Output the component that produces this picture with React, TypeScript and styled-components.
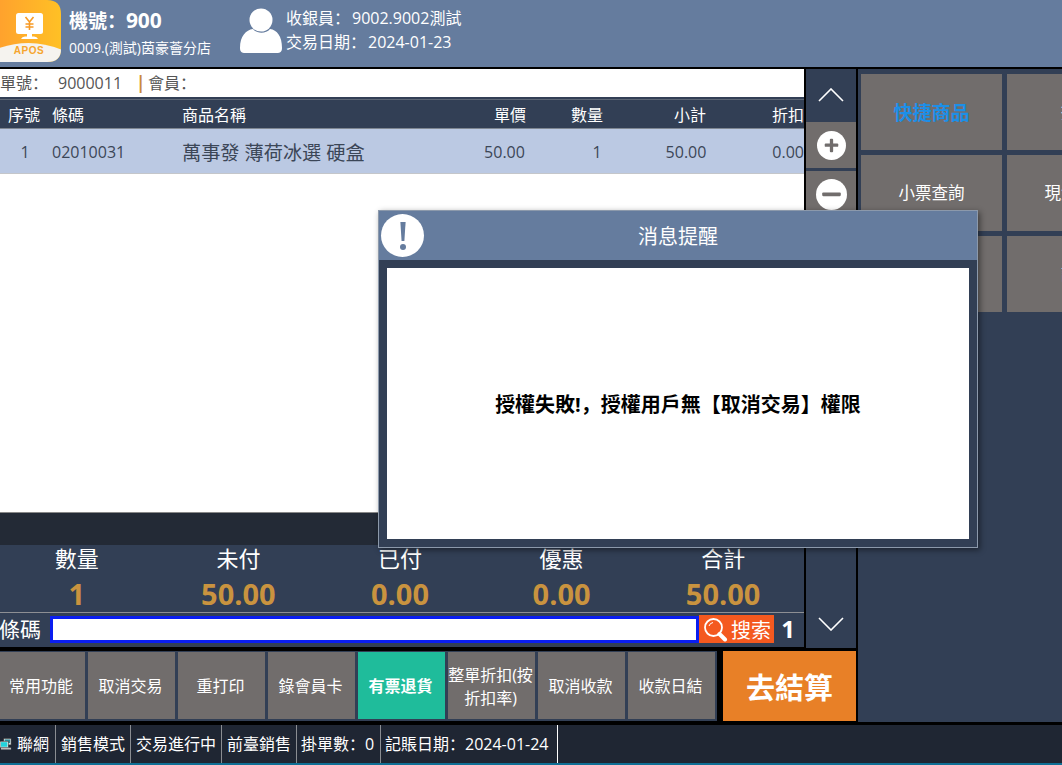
import React from 'react';
import styled, { createGlobalStyle } from 'styled-components';

const Global = createGlobalStyle`
  html, body { margin: 0; padding: 0; width: 1062px; height: 765px; overflow: hidden; background: #000; }
  * { box-sizing: border-box; }
  #root { width: 1062px; height: 765px; }
`;
const FONT = `"Open Sans", "Noto Sans CJK SC", "Noto Sans CJK TC", sans-serif`;

const Screen = styled.div`
  position: relative; width: 1062px; height: 765px; overflow: hidden; background: #000;
  display: flex; flex-direction: column; font-family: ${FONT}; color: #fff;
`;
const Header = styled.header`
  height: 67px; flex: none; background: #657c9e; display: flex; align-items: stretch; overflow: hidden; margin-bottom: 2px;
`;
const LogoBox = styled.div`width: 69px; flex: none; margin-top: -2px;`;
const Machine = styled.div`width: 171px; flex: none; display: flex; flex-direction: column;`;
const MachineNo = styled.div`font-size: 19px; font-weight: 700; line-height: 26px; margin-top: 7px; color: #fff; white-space: nowrap;`;
const MachineNum = styled.span`font-size: 21px; letter-spacing: -.2px;`;
const Shop = styled.div`font-size: 14px; line-height: 18px; margin-top: 5px; color: #fff; white-space: nowrap;`;
const PersonBox = styled.div`width: 46px; flex: none; padding-top: 8px;`;
const Cashier = styled.div`display: flex; flex-direction: column; padding-top: 6px;`;
const CashierLine = styled.div`font-size: 16px; line-height: 24px; white-space: nowrap;`;
const Gap2 = styled.span`margin-left: 2px;`;
const Workspace = styled.div`flex: none; height: 653px; display: flex; align-items: stretch;`;
const ColA = styled.div`width: 856px; flex: none; display: flex; flex-direction: column;`;
const TopA = styled.div`height: 582px; flex: none; display: flex; align-items: flex-start;`;
const Left = styled.div`width: 804px; height: 578px; flex: none; display: flex; flex-direction: column; overflow: hidden;`;
const InfoBar = styled.div`
  height: 28px; flex: none; background: #fff; color: #555; font-size: 16px; line-height: 28px; display: flex; white-space: nowrap;
`;
const OrderNo = styled.span`width: 137px; flex: none; display: flex;`;
const OrderLabel = styled.span`width: 58px; flex: none;`;
const Bar = styled.span`color: #c98a3c; width: 12px; margin-left: -1px; flex: none; font-size: 17px; font-weight: 700;`;
const TableHead = styled.div`
  height: 32px; flex: none; background: #323f55; border-top: 2px solid #323f55; box-shadow: inset 0 1px 0 #5d6776; border-bottom: 1px solid #7f8792;
  display: grid; grid-template-columns: 46px 136px 278px 100px 54px 152px 38px; align-items: center; font-size: 16px; color: #fff;
`;
const Cell = styled.div<{ $align?: string; $pad?: number; $padR?: number; $size?: number }>`
  text-align: ${p => p.$align || 'center'}; padding-left: ${p => p.$pad || 0}px; padding-right: ${p => p.$padR || 0}px; white-space: nowrap;
  ${p => (p.$size ? `font-size: ${p.$size}px;` : '')}
`;
const TableRow = styled.div`
  height: 45px; flex: none; background: #bbc9e3; border-bottom: 1px solid #c4c6ca; color: #3b4657; padding-top: 1px;
  display: grid; grid-template-columns: 46px 136px 278px 100px 54px 152px 38px; align-items: center; font-size: 16px;
`;
const TableBody = styled.div`flex: 1; background: #fff; border-bottom: 1px solid #888;`;
const DarkStrip = styled.div`height: 32px; flex: none; background: #232a36;`;
const Summary = styled.div`
  height: 68px; flex: none; background: #323f55; border-bottom: 1px solid #8d8f94; margin-left: -4px;
  display: grid; grid-template-columns: repeat(5, 161.6px);
`;
const SummaryCol = styled.div`display: flex; flex-direction: column; align-items: center;`;
const SummaryLabel = styled.div`font-size: 22px; line-height: 26px; color: #fff;`;
const SummaryValue = styled.div`font-size: 29px; font-weight: 700; line-height: 38px; margin-top: 4px; color: #c9933f;`;
const BarcodeRow = styled.div`
  height: 34px; flex: none; background: #323f55; display: flex; align-items: flex-start; padding-top: 2px;
`;
const BarcodeLabel = styled.div`width: 50px; flex: none; font-size: 21px; line-height: 28px; margin-left: -1px; padding-right: 0; flex-basis: 51px;`;
const BarcodeInput = styled.div`width: 649px; height: 27px; margin-top: 1px; flex: none; background: #fff; border: 3px solid #0a1ef0;`;
const SearchBtn = styled.div`
  width: 75px; height: 28px; flex: none; background: #f4591f; display: flex; align-items: center; padding-left: 4px; gap: 3px;
  font-size: 20px; color: #fff; white-space: nowrap;
`;
const Count = styled.div`flex: 1; text-align: center; font-size: 24px; font-weight: 700; line-height: 28px; padding-right: 2px;`;
const NavCol = styled.div`
  width: 50px; flex: none; margin-left: 2px; background: #323f55; display: flex; flex-direction: column; height: 579px;
`;
const NavArrow = styled.div<{ $top?: number; $bottom?: number }>`
  height: 53px; flex: none; display: flex; align-items: center; justify-content: center;
  padding-top: ${p => p.$top || 0}px; padding-bottom: ${p => p.$bottom || 0}px;
`;
const NavTile = styled.div<{ $h: number; $mt?: number }>`
  height: ${p => p.$h}px; flex: none; margin-top: ${p => p.$mt || 0}px; background: #716d6c; display: flex; align-items: center; justify-content: center;
`;
const NavSpacer = styled.div`flex: 1;`;
const Right = styled.div`
  flex: 1; margin-left: 2px; background: #323f55; padding: 5px 0 0 3px; overflow: hidden;
`;
const TileGrid = styled.div`display: grid; grid-template-columns: repeat(2, 141px); grid-auto-rows: 76px; gap: 5px;`;
const Tile = styled.div<{ $accent?: boolean }>`
  background: #716d6c; display: flex; align-items: center; justify-content: center; white-space: nowrap; padding-bottom: ${p => (p.$accent ? 0 : 2)}px;
  font-size: ${p => (p.$accent ? '19px' : '16.5px')}; font-weight: ${p => (p.$accent ? 700 : 400)}; color: ${p => (p.$accent ? '#1c8fe8' : '#fff')};
`;
const ActionZone = styled.div`flex: none; display: flex; height: 70px;`;
const ActionGroup = styled.div`
  width: 717px; background: #323f55; display: flex; gap: 3px; align-items: stretch; flex: none; padding: 1px 0 2px;
`;
const ActionBtn = styled.div<{ $teal?: boolean }>`
  width: 87px; flex: none; background: ${p => (p.$teal ? '#1fbc9b' : '#716d6c')}; color: #fff; font-weight: ${p => (p.$teal ? 700 : 400)};
  font-size: 16px; line-height: 23px; display: flex; align-items: center; justify-content: center; text-align: center; padding: 2px 2px 0 0; white-space: nowrap;
`;
const FirstBtn = styled(ActionBtn)`width: 85px; padding-right: 3px;`;
const Checkout = styled.div`
  width: 133px; margin-left: 6px; flex: none; background: #e88027; color: #fff; font-size: 29px; font-weight: 700;
  display: flex; align-items: center; justify-content: center;
`;
const StatusBar = styled.footer`
  flex: none; margin-top: 3px; width: 1062px; height: 40px; background: #1f2633; border-bottom: 2px solid #0f6f95;
  display: flex; font-size: 16px; color: #fff; line-height: 38px; white-space: nowrap;
`;
const StatusCell = styled.div<{ $w: number; $line?: string; $start?: boolean; $pad?: number }>`
  width: ${p => p.$w}px; flex: none; border-right: 1px solid ${p => p.$line || '#8a8d92'}; display: flex; align-items: center; gap: 5px;
  padding-left: ${p => p.$pad || 0}px;
  justify-content: ${p => (p.$start ? 'flex-start' : 'center')};
`;
const Modal = styled.div`
  position: absolute; left: 378px; top: 210px; width: 600px; height: 338px; background: #323f55; border: 1px solid #8c99ab;
  box-shadow: 2px 2px 6px rgba(0,0,0,.45); display: flex; flex-direction: column;
`;
const ModalTitle = styled.div`
  position: relative; height: 49px; flex: none; background: #657c9e; display: flex; align-items: center; justify-content: center;
  font-size: 20px; color: #fff;
`;
const ModalIcon = styled.div`
  position: absolute; left: 2px; top: 3px; width: 43px; height: 43px; border-radius: 50%; background: #fff;
  display: flex; align-items: center; justify-content: center;
`;
const ModalBody = styled.div`
  margin: 8px; flex: 1; background: #fff; color: #000; font-size: 20px; font-weight: 700;
  display: flex; align-items: center; justify-content: center; white-space: nowrap;
`;

const Logo = () => (
  <svg width="62" height="66" viewBox="0 0 62 66">
    <defs>
      <linearGradient id="lg" x1="0" x2="1" y1="0" y2="0">
        <stop offset="0" stopColor="#ff9f2e" />
        <stop offset="1" stopColor="#ffc125" />
      </linearGradient>
      <clipPath id="lc"><path d="M-6 2 H47 Q61 2 61 16 V51 Q61 64 47 64 H-6 Z" /></clipPath>
    </defs>
    <g clipPath="url(#lc)">
      <rect x="-6" y="0" width="68" height="66" fill="url(#lg)" />
      <path d="M-6 52 Q29 38 62 52 V66 H-6 Z" fill="#f5f3ef" />
    </g>
    <rect x="16" y="15" width="27" height="21" rx="2.5" fill="#fff" />
    <rect x="27" y="36" width="5" height="3" fill="#fff" />
    <path d="M21 41 Q22 38.5 25 38.5 H34 Q37 38.5 38 41 Z" fill="#fff" />
    <path d="M25.5 19 L29.5 24 L33.5 19 M29.5 24 V32 M25.5 26 H33.5 M25.5 29 H33.5" stroke="#f79a26" strokeWidth="1.6" fill="none" />
    <text x="29" y="56" textAnchor="middle" fontSize="10" fontWeight="700" fill="#f5a52e" fontFamily="Liberation Sans, sans-serif" letterSpacing=".6">APOS</text>
  </svg>
);
const Person = () => (
  <svg width="44" height="48" viewBox="0 0 44 48">
    <circle cx="21" cy="12" r="11.5" fill="#fff" />
    <path d="M0 40 C0 28 6 22 13 21 C17 26 26 26 30 21 C37 22 42 28 42 40 C42 44 40 45 37 45 H5 C2 45 0 44 0 40 Z" fill="#fff" />
  </svg>
);
const Chevron = ({ down }: { down?: boolean }) => (
  <svg width="26" height="14" viewBox="0 0 26 14">
    <path d={down ? 'M1 1 L13 13 L25 1' : 'M1 13 L13 1 L25 13'} stroke="#fff" strokeWidth="1.6" fill="none" />
  </svg>
);
const RoundSign = ({ plus, r }: { plus?: boolean; r: number }) => (
  <svg width={r * 2} height={r * 2} viewBox="0 0 30 30">
    <circle cx="15" cy="15" r="15" fill="#fff" />
    <rect x={plus ? 8 : 6} y="13" width={plus ? 14 : 18} height={plus ? 3.4 : 3.6} rx="1" fill="#716d6c" />
    {plus && <rect x="13.3" y="8" width="3.4" height="14" rx="1" fill="#716d6c" />}
  </svg>
);
const Magnifier = () => (
  <svg width="25" height="25" viewBox="0 0 25 25">
    <circle cx="10.5" cy="10.5" r="8.5" stroke="#fff" strokeWidth="1.8" fill="none" />
    <path d="M6 9 A5 5 0 0 1 10 5.5" stroke="#fff" strokeWidth="1" fill="none" />
    <path d="M16.5 17 L22 22.5" stroke="#fff" strokeWidth="4" strokeLinecap="round" />
  </svg>
);
const NetIcon = () => (
  <svg width="12" height="14" viewBox="0 0 13 14">
    <rect x="4" y="1" width="8" height="7" fill="#e8e8e8" stroke="#333" strokeWidth=".6" />
    <rect x="5" y="2" width="6" height="4" fill="#2a8a9a" />
    <rect x="0" y="4" width="9" height="7" fill="#e8e8e8" stroke="#333" strokeWidth=".6" />
    <rect x="1" y="5" width="7" height="5" fill="#22d3dc" />
    <rect x="1" y="11" width="11" height="2" fill="#bbb" />
  </svg>
);

const actions = ['取消交易', '重打印', '錄會員卡'];
const later = ['取消收款', '收款日結'];
const summary: [string, string][] = [['數量', '1'], ['未付', '50.00'], ['已付', '0.00'], ['優惠', '0.00'], ['合計', '50.00']];

export default function App() {
  return (
    <Screen>
      <Global />
      <Header>
        <LogoBox><Logo /></LogoBox>
        <Machine>
          <MachineNo>機號：<MachineNum>900</MachineNum></MachineNo>
          <Shop>0009.(測試)茵豪薈分店</Shop>
        </Machine>
        <PersonBox><Person /></PersonBox>
        <Cashier>
          <CashierLine>收銀員：<Gap2>9002.9002測試</Gap2></CashierLine>
          <CashierLine>交易日期：<Gap2>2024-01-23</Gap2></CashierLine>
        </Cashier>
      </Header>
      <Workspace>
        <ColA>
          <TopA>
            <Left>
              <InfoBar>
                <OrderNo><OrderLabel>單號：</OrderLabel>9000011</OrderNo>
                <Bar>|</Bar>會員：
              </InfoBar>
              <TableHead>
                <Cell $pad={2}>序號</Cell>
                <Cell $align="left" $pad={6}>條碼</Cell>
                <Cell $align="left">商品名稱</Cell>
                <Cell>單價</Cell>
                <Cell>數量</Cell>
                <Cell>小計</Cell>
                <Cell $align="right">折扣</Cell>
              </TableHead>
              <TableRow>
                <Cell $pad={4}>1</Cell>
                <Cell $align="left" $pad={6}>02010031</Cell>
                <Cell $align="left" $size={19.2}>萬事發 薄荷冰選 硬盒</Cell>
                <Cell $padR={11}>50.00</Cell>
                <Cell $pad={20}>1</Cell>
                <Cell $padR={8}>50.00</Cell>
                <Cell $align="right">0.00</Cell>
              </TableRow>
              <TableBody />
              <DarkStrip />
              <Summary>
                {summary.map(([l, v]) => (
                  <SummaryCol key={l}>
                    <SummaryLabel>{l}</SummaryLabel>
                    <SummaryValue>{v}</SummaryValue>
                  </SummaryCol>
                ))}
              </Summary>
              <BarcodeRow>
                <BarcodeLabel>條碼</BarcodeLabel>
                <BarcodeInput />
                <SearchBtn><Magnifier />搜索</SearchBtn>
                <Count>1</Count>
              </BarcodeRow>
            </Left>
            <NavCol>
              <NavArrow $bottom={2}><Chevron /></NavArrow>
              <NavTile $h={46}><RoundSign plus r={14.5} /></NavTile>
              <NavTile $h={46} $mt={3}><RoundSign r={15.5} /></NavTile>
              <NavSpacer />
              <NavArrow $top={4}><Chevron down /></NavArrow>
            </NavCol>
          </TopA>
          <ActionZone>
            <ActionGroup>
              <FirstBtn>常用功能</FirstBtn>
              {actions.map(a => <ActionBtn key={a}>{a}</ActionBtn>)}
              <ActionBtn $teal>有票退貨</ActionBtn>
              <ActionBtn>整單折扣(按<br />折扣率)</ActionBtn>
              {later.map(a => <ActionBtn key={a}>{a}</ActionBtn>)}
            </ActionGroup>
            <Checkout>去結算</Checkout>
          </ActionZone>
        </ColA>
        <Right>
          <TileGrid>
            <Tile $accent>快捷商品</Tile>
            <Tile>掛單</Tile>
            <Tile>小票查詢</Tile>
            <Tile>現金收款</Tile>
            <Tile />
            <Tile>設置</Tile>
          </TileGrid>
        </Right>
      </Workspace>
      <StatusBar>
        <StatusCell $w={56} $start><NetIcon />聯網</StatusCell>
        <StatusCell $w={75}>銷售模式</StatusCell>
        <StatusCell $w={91}>交易進行中</StatusCell>
        <StatusCell $w={75}>前臺銷售</StatusCell>
        <StatusCell $w={84} $start $pad={4}>掛單數：0</StatusCell>
        <StatusCell $w={177} $line="#fff" $start $pad={4}>記賬日期：2024-01-24</StatusCell>
      </StatusBar>
      <Modal>
        <ModalTitle>
          <ModalIcon>
            <svg width="12" height="30" viewBox="0 0 12 30">
              <path d="M3.4 1 H8.6 L7.4 20 H4.6 Z" fill="#657c9e" />
              <circle cx="6" cy="26" r="3" fill="#657c9e" />
            </svg>
          </ModalIcon>
          消息提醒
        </ModalTitle>
        <ModalBody>授權失敗!，授權用戶無【取消交易】權限</ModalBody>
      </Modal>
    </Screen>
  );
}
